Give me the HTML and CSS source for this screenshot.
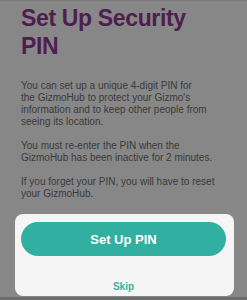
FILE: index.html
```html
<!DOCTYPE html>
<html>
<head>
<meta charset="utf-8">
<link rel="stylesheet" href="styles.css">
</head>
<body>
<div class="screen">
  <div class="content">
    <h1 class="title">Set Up Security<br>PIN</h1>
    <p class="para">You can set up a unique 4-digit PIN for<br>the GizmoHub to protect your Gizmo's<br>information and to keep other people from<br>seeing its location.</p>
    <p class="para">You must re-enter the PIN when the<br>GizmoHub has been inactive for 2 minutes.</p>
    <p class="para">If you forget your PIN, you will have to reset<br>your GizmoHub.</p>
  </div>
  <div class="sheet">
    <button class="primary">Set Up PIN</button>
    <a class="skip">Skip</a>
  </div>
</div>
</body>
</html>
```
FILE: styles.css
```css
html, body {
  margin: 0;
  padding: 0;
}
body {
  width: 247px;
  height: 300px;
  overflow: hidden;
  background: #878787;
  font-family: "Liberation Sans", Arial, sans-serif;
}
.screen {
  box-sizing: border-box;
  height: 300px;
  display: flex;
  flex-direction: column;
  border-top: 1px solid #7a7a7a;
  border-bottom: 3px solid #6e6e6e;
}
.content {
  flex: 1;
  min-height: 0;
  overflow: hidden;
  padding: 3px 21px 0 21px;
}
.title {
  margin: 0;
  font-size: 23px;
  line-height: 28px;
  font-weight: bold;
  letter-spacing: -0.35px;
  color: #4d1e4e;
  white-space: nowrap;
}
.para {
  margin: 0 0 12px 0;
  font-size: 10px;
  line-height: 12px;
  color: #3a3a3a;
  white-space: nowrap;
}
.title + .para {
  margin-top: 20px;
}
.sheet {
  flex: none;
  height: 82px;
  box-sizing: border-box;
  margin: 0 13px 1px 15px;
  background: #f5f5f5;
  border-radius: 8px;
  padding: 8px 8px 3px 6px;
  display: flex;
  flex-direction: column;
  align-items: center;
}
.primary {
  align-self: stretch;
  height: 34px;
  border: none;
  border-radius: 17px;
  background: #31b0a1;
  color: #ffffff;
  font-family: "Liberation Sans", Arial, sans-serif;
  font-weight: bold;
  font-size: 13px;
}
.skip {
  margin-top: 25px;
  font-size: 10px;
  font-weight: bold;
  color: #34b3a4;
  line-height: 12px;
}
```
